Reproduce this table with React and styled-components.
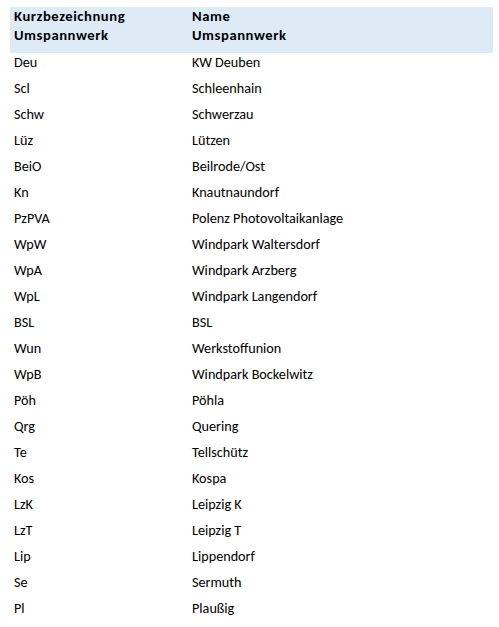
import styled, { createGlobalStyle } from "styled-components";

const GlobalStyle = createGlobalStyle`
  body {
    margin: 0;
    background: #ffffff;
    font-family: Carlito, Lato, "Liberation Sans", sans-serif;
    color: #000000;
  }
`;

const Page = styled.div`
  padding: 7px 6px 0 10px;
`;

const Table = styled.div`
  width: 483px;
`;

const HeaderRow = styled.div`
  display: grid;
  grid-template-columns: 178px 1fr;
  background: #ddebf7;
  height: 46px;
  box-sizing: border-box;
`;

const HeadCell = styled.div`
  padding-left: 4px;
  font-size: 14.67px;
  font-weight: 800;
  letter-spacing: 0.55px;
  line-height: 19px;
`;

const Row = styled.div`
  display: grid;
  grid-template-columns: 178px 1fr;
  height: 26px;
`;

const Cell = styled.div`
  padding-left: 4px;
  font-size: 14.2px;
  line-height: 18px;
`;

const rows = [
  ["Deu", "KW Deuben"],
  ["Scl", "Schleenhain"],
  ["Schw", "Schwerzau"],
  ["Lüz", "Lützen"],
  ["BeiO", "Beilrode/Ost"],
  ["Kn", "Knautnaundorf"],
  ["PzPVA", "Polenz Photovoltaikanlage"],
  ["WpW", "Windpark Waltersdorf"],
  ["WpA", "Windpark Arzberg"],
  ["WpL", "Windpark Langendorf"],
  ["BSL", "BSL"],
  ["Wun", "Werkstoffunion"],
  ["WpB", "Windpark Bockelwitz"],
  ["Pöh", "Pöhla"],
  ["Qrg", "Quering"],
  ["Te", "Tellschütz"],
  ["Kos", "Kospa"],
  ["LzK", "Leipzig K"],
  ["LzT", "Leipzig T"],
  ["Lip", "Lippendorf"],
  ["Se", "Sermuth"],
  ["Pl", "Plaußig"],
];

const App = () => {
  return (
    <Page>
      <GlobalStyle />
      <Table>
        <HeaderRow>
          <HeadCell>
            Kurzbezeichnung
            <br />
            Umspannwerk
          </HeadCell>
          <HeadCell>
            Name
            <br />
            Umspannwerk
          </HeadCell>
        </HeaderRow>
        {rows.map(([short, name]) => (
          <Row key={short}>
            <Cell>{short}</Cell>
            <Cell>{name}</Cell>
          </Row>
        ))}
      </Table>
    </Page>
  );
};

export default App;
